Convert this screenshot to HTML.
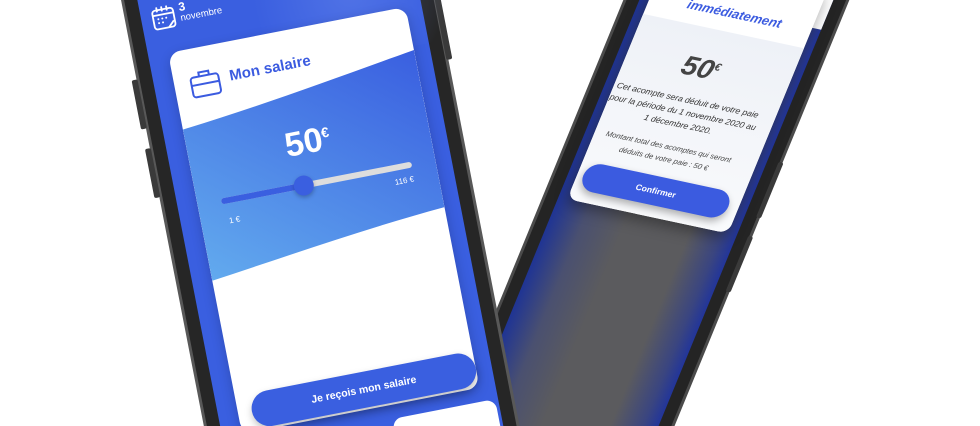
<!DOCTYPE html>
<html><head><meta charset="utf-8"><style>
*{margin:0;padding:0;box-sizing:border-box}
html,body{width:980px;height:426px;overflow:hidden;background:#fff;font-family:"Liberation Sans",sans-serif}
#wrap{position:relative;width:980px;height:426px;overflow:hidden;background:#fff}
.abs{position:absolute}
#L{position:absolute;left:168px;top:53px;width:0;height:0;transform-origin:0 0;transform:rotate(-11deg)}
#R{position:absolute;left:0;top:0;width:0;height:0;transform-origin:0 0;transform:matrix(0.98,0.21,-0.38,0.926,644,12)}
</style></head><body>
<div id="wrap">
<!-- RIGHT PHONE -->
<div id="R">
  <div class="abs" style="left:-24px;top:-200px;width:212px;height:900px;background:#242424;border-radius:40px;border:3px solid #4b4b4b"></div>
  <div class="abs" style="left:184px;top:120px;width:5px;height:60px;background:#3a3a3a;border-radius:2px"></div>
  <div class="abs" style="left:184px;top:200px;width:5px;height:60px;background:#3a3a3a;border-radius:2px"></div>
  <div class="abs" style="left:-9px;top:-190px;width:182px;height:880px;border-radius:30px;background:linear-gradient(90deg,#1f3494 0%,#4a5070 18%,#5b5b5e 40%,#5b5b5e 75%,#3a4580 92%,#22359a 100%)"></div>
  <div class="abs" style="left:-9px;top:-190px;width:182px;height:170px;background:#fff;border-radius:30px 30px 0 0"></div>
  <div class="abs" style="left:0;top:-60px;width:164px;height:262px;background:#fff;border-radius:0 0 10px 10px;box-shadow:0 6px 14px rgba(0,0,0,.35)"></div>
  <div class="abs" style="left:0;top:2px;width:164px;height:200px;background:linear-gradient(#eef1f7,#f9fafc);border-radius:0 0 10px 10px"></div>
  <div class="abs" style="left:10px;top:-30px;width:14px;height:10px;border:2px solid #3b5be0;border-top:none"></div>
  <div class="abs" style="left:38px;top:-25px;font-size:13px;font-weight:bold;font-style:italic;color:#3b5be0;white-space:nowrap">immédiatement</div>
  <div class="abs" style="left:0;top:28px;width:150px;text-align:center;font-size:28px;font-weight:bold;font-style:italic;color:#444">50<sup style="font-size:11px">€</sup></div>
  <div class="abs" style="left:0;top:72px;width:150px;text-align:center;font-size:8.5px;line-height:13px;font-style:italic;color:#333">Cet acompte sera déduit de votre paie pour la période du 1 novembre 2020 au 1 décembre 2020.</div>
  <div class="abs" style="left:5px;top:122px;width:140px;text-align:center;font-size:7.5px;line-height:13px;font-style:italic;color:#444">Montant total des acomptes qui seront déduits de votre paie : 50 €</div>
  <div class="abs" style="left:6px;top:160px;width:148px;height:30px;border-radius:15px;background:#3b5be0;color:#fff;font-size:8.5px;font-weight:bold;text-align:center;line-height:30px;box-shadow:0 4px 8px rgba(0,0,0,.3)">Confirmer</div>
</div>

<!-- LEFT PHONE -->
<div id="L">
  <div class="abs" style="left:-36px;top:-300px;width:310px;height:1000px;background:#262626;border-radius:44px;border:3px solid #585858"></div>
  <div class="abs" style="left:-41px;top:20px;width:6px;height:50px;background:#3a3a3a;border-radius:2px"></div>
  <div class="abs" style="left:-41px;top:90px;width:6px;height:50px;background:#3a3a3a;border-radius:2px"></div>
  <div class="abs" style="left:272px;top:-10px;width:6px;height:70px;background:#3a3a3a;border-radius:2px"></div>
  <div class="abs" style="left:-20px;top:-290px;width:278px;height:980px;background:#3a5fe0;border-radius:34px"></div>
  <div class="abs" style="left:90px;top:-120px;width:200px;height:160px;background:radial-gradient(circle at 50% 60%,rgba(120,150,240,.35),rgba(58,95,224,0) 70%)"></div>
  <svg class="abs" style="left:-10px;top:-48px" width="26" height="26" viewBox="0 0 26 26" fill="none" stroke="#fff" stroke-width="1.8"><rect x="2" y="4" width="21" height="19" rx="3"/><path d="M2 9h21M7 1v5M12 1v5M17 1v5"/><g fill="#fff" stroke="none"><circle cx="7" cy="13" r="1"/><circle cx="11" cy="13" r="1"/><circle cx="15" cy="13" r="1"/><circle cx="7" cy="17" r="1"/><circle cx="11" cy="17" r="1"/></g><path d="M16 23l6-6"/></svg>
  <div class="abs" style="left:19px;top:-50px;color:#fff;font-size:12px;font-weight:bold">3</div>
  <div class="abs" style="left:19px;top:-37px;color:#fff;font-size:9.5px">novembre</div>
  <div class="abs" style="left:0;top:0;width:242px;height:388px;background:#fff;border-radius:12px;box-shadow:0 4px 12px rgba(0,0,0,.2);overflow:hidden">
    <svg class="abs" style="left:0;top:0" width="242" height="240"><defs><linearGradient id="g" x1="1" y1="0" x2="0" y2="1"><stop offset="0" stop-color="#3a5fe0"/><stop offset="1" stop-color="#62aaee"/></linearGradient></defs><path d="M0 78 C80 70 170 55 242 44 L242 204 C160 210 80 222 0 232Z" fill="url(#g)"/></svg>
    <svg class="abs" style="left:14px;top:20px" width="34" height="34" viewBox="0 0 34 34" fill="none" stroke="#3b5be0" stroke-width="2"><rect x="3" y="9" width="28" height="20" rx="3"/><path d="M12 9V5h10v4M3 17h28"/></svg>
    <div class="abs" style="left:56px;top:26px;color:#3b5be0;font-size:15px;font-weight:bold">Mon salaire</div>
    <div class="abs" style="left:60px;top:95px;width:120px;text-align:center;color:#fff;font-size:34px;font-weight:bold">50<sup style="font-size:14px">€</sup></div>
    <div class="abs" style="left:24px;top:153px;width:194px;height:6px;border-radius:3px;background:#ddd"></div>
    <div class="abs" style="left:24px;top:153px;width:86px;height:6px;border-radius:3px;background:#3a5fe0"></div>
    <div class="abs" style="left:98px;top:146px;width:20px;height:20px;border-radius:50%;background:#3a5fe0;box-shadow:0 2px 4px rgba(0,0,0,.25)"></div>
    <div class="abs" style="left:28px;top:172px;color:#fff;font-size:8px">1 €</div>
    <div class="abs" style="left:198px;top:166px;color:#fff;font-size:8px">116 €</div>
  </div>
  <div class="abs" style="left:14px;top:350px;width:228px;height:36px;border-radius:18px;background:#3a5fe0;color:#fff;font-size:10.5px;font-weight:bold;text-align:center;line-height:36px;box-shadow:0 4px 8px rgba(0,0,0,.25)">Je reçois mon salaire</div>
  <div class="abs" style="left:150px;top:402px;width:105px;height:60px;background:#fff;border-radius:10px"></div>
</div>
</div>
</body></html>
